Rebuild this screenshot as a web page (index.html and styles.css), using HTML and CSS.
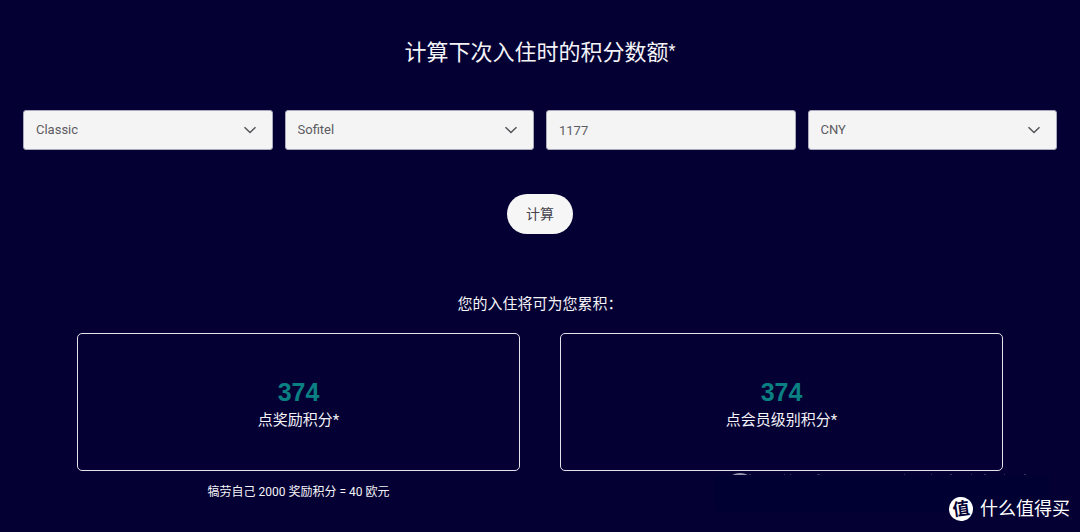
FILE: index.html
```html
<!DOCTYPE html>
<html lang="zh-CN">
<head>
<meta charset="utf-8">
<meta name="viewport" content="width=device-width, initial-scale=1">
<title>计算积分</title>
<link rel="stylesheet" href="styles.css">
</head>
<body>
<main class="calculator">
  <h1 class="title">计算下次入住时的积分数额<span class="mark">*</span></h1>
  <form class="form">
    <div class="fields">
      <div class="field">
        <select class="control" aria-label="会员级别"><option>Classic</option></select>
        <svg class="chevron" viewBox="0 0 14 8" aria-hidden="true"><path d="M1.5 1.2 7 6.5l5.500-5.300"/></svg>
      </div>
      <div class="field">
        <select class="control" aria-label="酒店品牌"><option>Sofitel</option></select>
        <svg class="chevron" viewBox="0 0 14 8" aria-hidden="true"><path d="M1.5 1.2 7 6.5l5.500-5.300"/></svg>
      </div>
      <div class="field">
        <input class="control" type="text" inputmode="numeric" value="1177" aria-label="金额">
      </div>
      <div class="field">
        <select class="control" aria-label="货币"><option>CNY</option></select>
        <svg class="chevron" viewBox="0 0 14 8" aria-hidden="true"><path d="M1.5 1.2 7 6.5l5.500-5.300"/></svg>
      </div>
    </div>
    <button class="submit" type="button">计算</button>
  </form>
  <section class="results">
    <h2 class="subtitle">您的入住将可为您累积：</h2>
    <div class="cards">
      <div class="column">
        <div class="card">
          <strong class="points">374</strong>
          <span class="label">点奖励积分*</span>
        </div>
        <p class="note">犒劳自己 2000 奖励积分 = 40 欧元</p>
      </div>
      <div class="column">
        <div class="card">
          <strong class="points">374</strong>
          <span class="label">点会员级别积分*</span>
        </div>
      </div>
    </div>
  </section>
  <svg class="patch" viewBox="0 0 336 39" aria-hidden="true">
    <rect class="patch-fill" y="3" width="336" height="36"/>
    <path class="patch-cap" d="M18 3Q26-1 34 3z"/>
    <path class="patch-specks" d="M35 2.500h2M70 2.500h1M76 2.500h1M103 2.500h3M190 2.500h1M217 2.500h1M236 2.500h2M257 2.500h1M270 2.500h2M290 2.500h1M310 2.500h2"/>
  </svg>
  <div class="watermark">
    <span class="badge">值</span>
    <span class="brand">什么值得买</span>
  </div>
</main>
</body>
</html>
```

FILE: styles.css
```css
* {
  box-sizing: border-box;
}

body {
  margin: 0;
  background: #040033;
  color: #f4f4f8;
  font-family: Roboto, "Noto Sans CJK SC", sans-serif;
}

.calculator {
  position: relative;
  min-height: 100vh;
  padding: 37px 23px 0;
}

.title {
  margin: 0;
  font-size: 22px;
  font-weight: 400;
  line-height: 32px;
  text-align: center;
}

.mark {
  font-size: 16px;
  line-height: 1;
  vertical-align: 4px;
}

.form {
  display: flex;
  flex-direction: column;
  align-items: center;
  gap: 44px;
  margin-top: 41px;
}

.fields {
  display: grid;
  grid-template-columns: repeat(4, 1fr);
  gap: 12px;
  width: 100%;
}

.field {
  position: relative;
}

.control {
  display: block;
  width: 100%;
  height: 40px;
  padding: 0 12px;
  border: 1px solid #aaa8bb;
  border-radius: 3px;
  appearance: none;
  background: #f4f4f4;
  color: #5c5b62;
  font: 13px/18px Roboto, sans-serif;
}

.chevron {
  position: absolute;
  top: 16px;
  right: 16px;
  width: 14px;
  height: 8px;
  fill: none;
  stroke: #55545a;
  stroke-width: 1.5;
  pointer-events: none;
}

.submit {
  height: 40px;
  padding: 0 19px;
  border: 0;
  border-radius: 20px;
  background: #f6f6f6;
  color: #45444c;
  font: 14px/20px Roboto, "Noto Sans CJK SC", sans-serif;
}

.results {
  margin-top: 58px;
  padding: 0 54px;
}

.subtitle {
  margin: 0;
  font-size: 15px;
  font-weight: 400;
  line-height: 24px;
  text-align: center;
}

.cards {
  display: grid;
  grid-template-columns: 1fr 1fr;
  gap: 40px;
  margin-top: 17px;
}

.card {
  display: flex;
  flex-direction: column;
  align-items: center;
  padding: 42px 16px 38px;
  border: 1px solid #e4e3ec;
  border-radius: 5px;
}

.points {
  color: #0b8083;
  font: bold 25px/32px "Liberation Sans", sans-serif;
}

.label {
  font-size: 15px;
  line-height: 24px;
}

.note {
  margin: 12px 0 0;
  font-size: 12px;
  line-height: 18px;
  text-align: center;
}

.patch {
  position: absolute;
  right: 30px;
  bottom: 21px;
  width: 336px;
  height: 39px;
}

.patch-fill {
  fill: #000033;
}

.patch-cap {
  fill: #9a98b0;
}

.patch-specks {
  fill: none;
  stroke: #34325a;
}

.watermark {
  position: absolute;
  right: 10px;
  bottom: 10px;
  display: flex;
  align-items: center;
  gap: 7px;
  color: #ffffff;
}

.badge {
  width: 24px;
  height: 24px;
  border-radius: 50%;
  background: #ffffff;
  color: #040033;
  font-size: 17px;
  font-weight: 700;
  line-height: 24px;
  text-align: center;
  transform: rotate(-8deg);
}

.brand {
  font-size: 18px;
  line-height: 26px;
}
```
